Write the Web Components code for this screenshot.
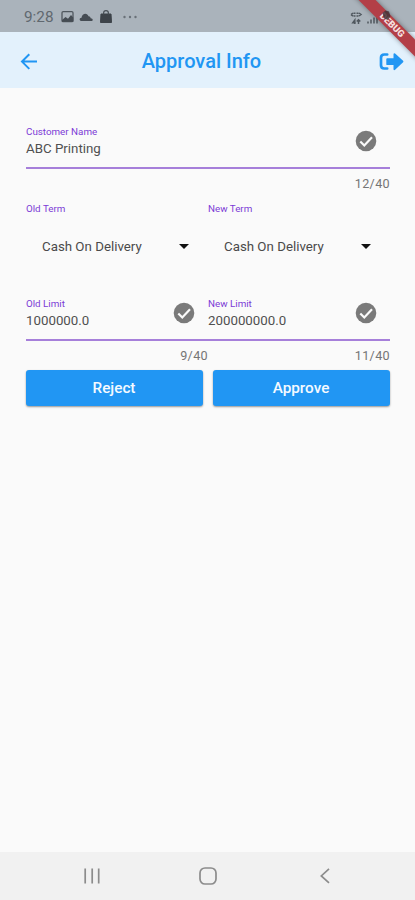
<!DOCTYPE html>
<html lang="en">
<head>
<meta charset="utf-8">
<title>Approval Info</title>
<style>
html,body{margin:0;height:100%;background:#fafafa;font-family:Roboto,"Liberation Sans",sans-serif}
body{overflow:hidden}
</style>
</head>
<body>
<approval-screen></approval-screen>
<script>
const define = (name, html) => customElements.define(name, class extends HTMLElement {
  constructor() {
    super();
    const t = document.createElement('template');
    t.innerHTML = html;
    this.attachShadow({ mode: 'open' }).append(t.content.cloneNode(true));
  }
});

define('status-bar', `
<style>
:host{display:flex;align-items:center;height:32px;background:#aab3bb;color:#60686f;box-sizing:border-box;padding:1px 0 0 24px}
.time{font-size:15.300px;width:37px;line-height:18px}
svg{display:block}
.right{margin-left:auto}
</style>
<span class="time">9:28</span>
<svg width="80" height="20" viewBox="0 0 80 20">
  <rect x="1" y="4.6" width="11" height="10" rx="1.2" fill="none" stroke="#50585f" stroke-width="1.3"/>
  <path d="M1 13l3.5-3 2.5 1.8L10 8l2.3 2.500v4.300H1z" fill="#454c53"/>
  <path d="M20.800 14c-2.800 0-2.800-3.200-.3-3.300.6-4.800 5.900-5.300 7-1.500 1.800.2 2 1.300 2.200 2 2.700.3 2.500 2.800.7 2.800z" fill="#454c53"/>
  <path d="M40 7h10l.5 8.500H39.500z" fill="#3d4349" stroke="#3d4349" stroke-linejoin="round"/>
  <path d="M42.600 7.500V6q0-2.400 2.400-2.400T47.400 6v1.500" fill="none" stroke="#484f55" stroke-width="1.200"/>
  <g fill="#697178"><circle cx="63.500" cy="10" r="1.200"/><circle cx="69" cy="10" r="1.200"/><circle cx="74.500" cy="10" r="1.200"/></g>
</svg>
<svg class="right" width="65" height="22" viewBox="350 5 65 22">
  <g fill="none" stroke="#50585f" stroke-width="1.500">
    <path d="M351 13.500l2-1.500M351 13.700l2 1.300M353.500 12.200h2M353.500 15h2M356.500 12.200h2M356.500 15h2M359 12l2 1.500-2 1.500"/>
    <path d="M354.800 23v-4l-2 2.700h2.900M358.500 19v4M356.700 20.500l1.800-1.800 1.800 1.800"/>
    <path d="M368 22.500v-2M371 22.500v-4M374 22.500v-6M377 22.500v-8"/>
  </g>
</svg>`);

define('debug-banner', `
<style>
:host{position:absolute;right:0;top:0;width:70px;height:70px;overflow:hidden;pointer-events:none}
.band{position:absolute;left:-3.500px;top:18.500px;width:100px;height:12.300px;background:#b33f47;transform:rotate(45deg);box-shadow:0 0 5px #0006;color:#f6dede;font-size:9.500px;font-weight:900;line-height:12px;text-align:center}
svg{position:absolute;left:34px;top:9px}
</style>
<div class="band">DEBUG</div>
<svg width="14" height="14" viewBox="0 0 14 14"><path d="M3.500 4l3-2.500 3.500 1 1.500 5-2.500 3.500-4-1.500z" fill="#443338" opacity=".85"/></svg>`);

define('app-header', `
<style>
:host{display:grid;grid-template-columns:60px 1fr 60px;align-items:center;height:56px;background:#e3f1fc;color:#2196f3}
h1{margin:0;text-align:center;font-size:20px;font-weight:500;line-height:24px;padding:1px 12px 0 0;white-space:nowrap}
svg{display:block}
.back{margin:1px 0 0 19px}
.exit{margin:3px 0 0 23px}
</style>
<svg class="back" width="20" height="20" viewBox="0 0 20 20" fill="none" stroke="currentColor" stroke-width="2"><path d="M18 10.600H3M10.300 3.300L3 10.600l7.300 7.300"/></svg>
<h1><slot></slot></h1>
<svg class="exit" width="28" height="24" viewBox="0 0 28 24"><path d="M9.200 4.500H6.300Q3 4.500 3 7.800v7.400q0 3.300 3.300 3.300h2.900" fill="none" stroke="currentColor" stroke-width="2.700" stroke-linecap="round"/><path d="M8.300 9.200q0-.9.900-.9h6.300V4.200q.3-1.600 1.600-.6l8 7.200q.7.700 0 1.400l-8 7.600q-1.300 1-1.600-.6v-4.100H9.200q-.9 0-.9-.9z" fill="currentColor"/></svg>`);

define('text-field', `
<style>
:host{display:block;min-width:0}
.row{display:flex;justify-content:space-between;height:44px;border-bottom:2px solid #a67fda;box-sizing:border-box}
.label{font-size:9.800px;line-height:12px;color:#7c3bd6;padding-top:1px;white-space:nowrap}
.value{font-size:13.300px;line-height:17px;color:#505050;padding-top:2px;white-space:nowrap}
svg{display:block;margin:4px 12px 0 0}
.count{font-size:12.600px;line-height:16px;text-align:right;color:#757575;padding-top:7px;letter-spacing:.35px}
</style>
<div class="row">
  <div><div class="label"><slot name="label"></slot></div><div class="value"><slot></slot></div></div>
  <svg width="24" height="24" viewBox="0 0 24 24"><circle cx="12" cy="12" r="10.300" fill="#7a7a7a"/><path d="M6.300 12.500l4 4L18 8.300" fill="none" stroke="#fafafa" stroke-width="2.200"/></svg>
</div>
<div class="count"><slot name="count"></slot></div>`);

define('term-select', `
<style>
:host{display:block;min-width:0}
.label{font-size:9.800px;line-height:12px;color:#7c3bd6}
.pick{display:flex;justify-content:space-between;align-items:center;height:24px;margin:19px 19px 0 16px;font-size:13.300px;color:#4a4a4a;white-space:nowrap}
i{border:5px solid transparent;border-top-color:#111;border-bottom:0}
</style>
<div class="label"><slot name="label"></slot></div>
<div class="pick"><slot></slot><i></i></div>`);

define('action-button', `
<style>
:host{display:block}
button{display:block;width:100%;height:36px;padding:0 1px 0 0;border:0;border-radius:3px;background:#2196f3;color:#f5faff;font:500 15.300px/35px Roboto,sans-serif;box-shadow:0 1px 2px #0006}
</style>
<button><slot></slot></button>`);

define('system-nav', `
<style>
:host{display:grid;grid-template-columns:repeat(3,116.500px);justify-content:center;justify-items:center;align-items:center;height:48px;background:#f1f1f1;box-sizing:border-box;padding-left:1px}
svg{display:block;fill:none;stroke:#8c8c8c;stroke-width:1.700}
</style>
<svg width="20" height="20"><path d="M3.200 2.500v15M10.200 2.500v15M16.700 2.500v15"/></svg>
<svg width="20" height="20"><rect x="2" y="2" width="16" height="16" rx="5"/></svg>
<svg width="20" height="20"><path d="M14 2.800L6.300 9.900l7.700 7"/></svg>`);

define('approval-screen', `
<style>
:host{display:flex;flex-direction:column;position:relative;height:900px;background:#fafafa}
main{flex:1;padding:37px 25px 0 26px}
.pair{display:grid;grid-template-columns:1fr 1fr}
.terms{margin-top:11px}
.limits{margin-top:39px}
.limits text-field:first-child{margin-right:0}
.actions{gap:10px;margin-top:6px}
</style>
<status-bar></status-bar>
<app-header>Approval Info</app-header>
<main>
  <text-field><span slot="label">Customer Name</span>ABC Printing<span slot="count">12/40</span></text-field>
  <div class="pair terms">
    <term-select><span slot="label">Old Term</span>Cash On Delivery</term-select>
    <term-select><span slot="label">New Term</span>Cash On Delivery</term-select>
  </div>
  <div class="pair limits">
    <text-field><span slot="label">Old Limit</span>1000000.0<span slot="count">9/40</span></text-field>
    <text-field><span slot="label">New Limit</span>200000000.0<span slot="count">11/40</span></text-field>
  </div>
  <div class="pair actions">
    <action-button>Reject</action-button>
    <action-button>Approve</action-button>
  </div>
</main>
<system-nav></system-nav>
<debug-banner></debug-banner>`);
</script>
</body>
</html>
